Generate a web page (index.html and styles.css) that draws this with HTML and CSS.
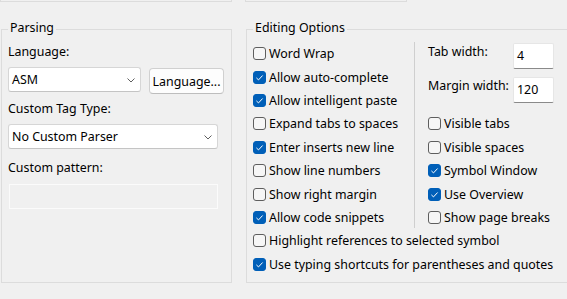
FILE: index.html
```html
<!DOCTYPE html>
<html lang="en">
<head>
    <meta charset="UTF-8">
    <title>Editor Options</title>
    <link rel="stylesheet" href="styles.css">
</head>
<body>
    <div class="top">
        <div class="top-box left"></div>
        <div class="top-box right"></div>
    </div>

    <div class="panes">
        <fieldset class="group parsing">
            <legend>Parsing</legend>
            <div class="label first">Language:</div>
            <div class="combo-row">
                <div class="combo short">
                    <span>ASM</span>
                    <svg class="chevron" width="8" height="5" viewBox="0 0 8 5"><path d="M0.5 0.5 L4 4 L7.5 0.5" fill="none" stroke="#5f5f5f" stroke-width="1"/></svg>
                </div>
                <button class="btn">Language...</button>
            </div>
            <div class="label tag">Custom Tag Type:</div>
            <div class="combo wide">
                <span>No Custom Parser</span>
                <svg class="chevron" width="8" height="5" viewBox="0 0 8 5"><path d="M0.5 0.5 L4 4 L7.5 0.5" fill="none" stroke="#5f5f5f" stroke-width="1"/></svg>
            </div>
            <div class="label pattern">Custom pattern:</div>
            <div class="text-disabled"></div>
        </fieldset>

        <fieldset class="group editing">
            <legend>Editing Options</legend>
            <div class="columns">
                <div class="col-left">
                    <div class="check"><span class="box"></span>Word Wrap</div>
                    <div class="check on"><span class="box"></span>Allow auto-complete</div>
                    <div class="check on"><span class="box"></span>Allow intelligent paste</div>
                    <div class="check"><span class="box"></span>Expand tabs to spaces</div>
                    <div class="check on"><span class="box"></span>Enter inserts new line</div>
                    <div class="check"><span class="box"></span>Show line numbers</div>
                    <div class="check"><span class="box"></span>Show right margin</div>
                    <div class="check on"><span class="box"></span>Allow code snippets</div>
                </div>
                <div class="separator"></div>
                <div class="col-right">
                    <div class="numbers">
                        <div class="num-row">
                            <span class="num-label">Tab width:</span>
                            <div class="num-input">4</div>
                        </div>
                        <div class="num-row">
                            <span class="num-label">Margin width:</span>
                            <div class="num-input">120</div>
                        </div>
                    </div>
                    <div class="check"><span class="box"></span>Visible tabs</div>
                    <div class="check"><span class="box"></span>Visible spaces</div>
                    <div class="check on"><span class="box"></span>Symbol Window</div>
                    <div class="check on"><span class="box"></span>Use Overview</div>
                    <div class="check"><span class="box"></span>Show page breaks</div>
                </div>
            </div>
            <div class="check"><span class="box"></span>Highlight references to selected symbol</div>
            <div class="check on"><span class="box"></span>Use typing shortcuts for parentheses and quotes</div>
        </fieldset>
    </div>

    <script>
        // tick marks for the checked boxes
        document.querySelectorAll('.check.on .box').forEach(function(box) {
            box.innerHTML = '<svg width="13" height="13" viewBox="0 0 13 13"><path d="M3.4 6.9 L5.5 8.9 L9.6 4.5" fill="none" stroke="#fff" stroke-width="1"/></svg>';
        });
    </script>
</body>
</html>
```

FILE: styles.css
```css
* {
    box-sizing: border-box;
}

body {
    margin: 0;
    width: 567px;
    height: 299px;
    overflow: hidden;
    background-color: #f0f0f0;
    font-family: "Noto Sans", "Liberation Sans", sans-serif;
    font-size: 12.4px;
    color: #000;
}

.top {
    display: flex;
    height: 2px;
}

.top-box {
    height: 2px;
    border: 1px solid #dcdcdc;
    border-top: none;
}

.top-box.left {
    width: 232px;
}

.top-box.right {
    width: 162px;
    margin-left: 13px;
}

.panes {
    display: flex;
    margin-top: 18px;
}

.group {
    margin: 0;
    padding: 0 6px;
    height: 263px;
    border: 1px solid #dcdcdc;
    flex-shrink: 0;
}

.group legend {
    padding: 0 2px 2px;
    line-height: 16px;
}

.parsing {
    width: 231px;
    margin-left: 1px;
}

.editing {
    width: 340px;
    margin-left: 14px;
    padding-top: 4px;
}

/* parsing */
.label {
    line-height: 16px;
}

.label.first {
    margin-top: 6px;
}

.label.tag {
    margin-top: 7px;
}

.label.pattern {
    margin-top: 11px;
}

.combo-row {
    display: flex;
    margin-top: 7px;
    height: 27px;
}

.combo {
    display: flex;
    align-items: center;
    justify-content: space-between;
    height: 25px;
    padding: 0 5px 0 3px;
    background: #fff;
    border: 1px solid #d6d6d6;
    border-bottom-color: #c4c4c4;
    border-radius: 3px;
}

.combo.short {
    width: 133px;
}

.combo.wide {
    width: 210px;
    margin-top: 7px;
}

.chevron {
    margin-top: 1px;
}

.btn {
    margin: 1px 0 0 8px;
    width: 75px;
    height: 26px;
    padding: 0;
    font: inherit;
    color: #000;
    background: #fdfdfd;
    border: 1px solid #d0d0d0;
    border-bottom-color: #bdbdbd;
    border-radius: 4px;
}

.text-disabled {
    width: 209px;
    height: 25px;
    margin: 8px 0 0 1px;
    border: 1px solid #fbfbfb;
}

/* editing options */
.columns {
    display: flex;
}

.col-left {
    width: 161px;
}

.separator {
    width: 1px;
    height: 186px;
    background: #cfcfcf;
}

.col-right {
    margin-left: 13px;
}

.check {
    display: flex;
    align-items: center;
    height: 23.4px;
    white-space: nowrap;
}

.box {
    width: 13px;
    height: 13px;
    margin-right: 3px;
    flex-shrink: 0;
    border: 1px solid #5e5e5e;
    border-radius: 3px;
    background: #f6f6f6;
}

.box svg {
    display: block;
    margin: -1px;
}

.check.on .box {
    background: #005fb8;
    border-color: #005fb8;
}

.numbers {
    height: 70.2px;
    padding-top: 1px;
}

.num-row {
    display: flex;
    margin-bottom: 8px;
}

.num-label {
    width: 85px;
    line-height: 16px;
    padding-top: 1px;
}

.num-input {
    width: 41px;
    height: 26px;
    padding: 4px 0 0 3px;
    line-height: 16px;
    background: #fff;
    border: 1px solid #e6e6e6;
    border-bottom-color: #8a8a8a;
    border-radius: 2px;
}
```
